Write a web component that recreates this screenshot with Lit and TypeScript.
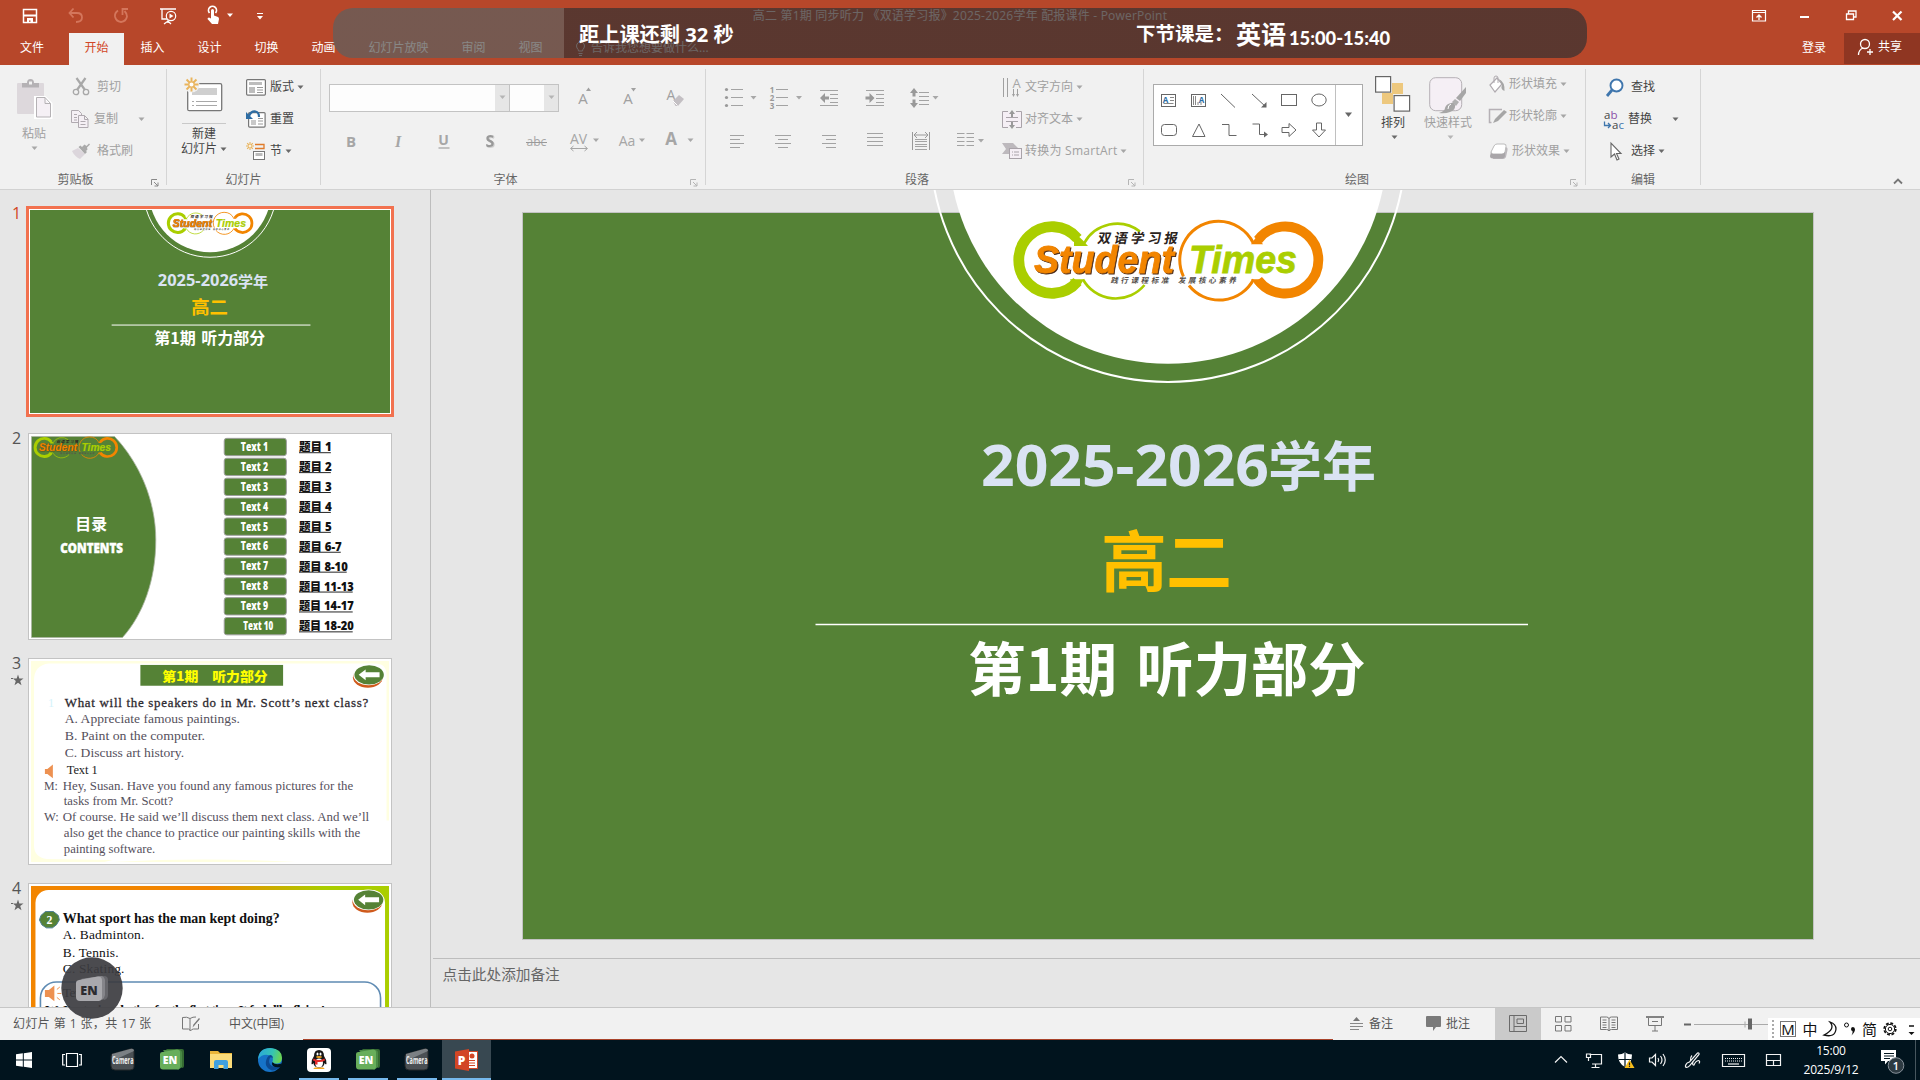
import { LitElement, html, svg, css } from "lit";
import { customElement } from "lit/decorators.js";

const icon = (w: number, h: number, body: unknown, cls = "") =>
  html`<svg class=${cls} width=${w} height=${h} viewBox="0 0 ${w} ${h}">${body}</svg>`;

/* Small drop-down triangle centred on x, y. */
const caret = (x: number, y: number, color = "#a8a8a8") =>
  svg`<path d="M${x - 3} ${y - 1.5}h6l-3 3.5z" fill=${color}></path>`;
const caretIcon = (color = "#a8a8a8") => icon(7, 5, caret(3.5, 2, color));

const lines = (x1: number, x2: number, ys: number[], color = "#a6a6a6") =>
  ys.map((y) => svg`<path d="M${x1} ${y}H${x2}" stroke=${color} fill="none"></path>`);

const G = "#a6a6a6";
const D = "#6a6a6a";

/* ---------- artwork shared by the slide and its thumbnails ---------- */

const logo = () => svg`
  <g fill="none">
    <path d="M1077.500 238.500A33.300 33.300 0 1 0 1077.500 281.500" stroke="#aace00" stroke-width="10.800"></path>
    <path d="M1074 232l9 8.500l5 5.500h-14zM1074 287l5.500-.5L1084 279.200h-14z" fill="#aace00"></path>
    <path d="M1084 243.500A37.500 37.500 0 0 1 1140 231.500" stroke="#aace00" stroke-width="2.600"></path>
    <path d="M1083 279.500A37.500 37.500 0 0 0 1144.500 285" stroke="#aace00" stroke-width="2.600"></path>
    <path d="M1253.300 243A38.700 38.700 0 0 0 1218.500 221.300A38.700 38.700 0 0 0 1183.400 276.400" stroke="#f28500" stroke-width="3"></path>
    <path d="M1189 285.500A38.700 38.700 0 0 0 1253.500 279.500" stroke="#f28500" stroke-width="3"></path>
    <path d="M1258 240A33.500 33.500 0 1 1 1258 280" stroke="#f28500" stroke-width="9.800"></path>
    <path d="M1251 244.200L1257 236l6 8.200zM1251 279.200L1257 286l6-6.800z" fill="#f28500"></path>
  </g>
  <g font-family="Liberation Sans, sans-serif" font-weight="700" font-style="italic" font-size="39">
    <text class="wordmark" x="1034" y="273.200" textLength="140" lengthAdjust="spacingAndGlyphs" fill="#f28500" stroke="#f28500" stroke-width=".8">Student</text>
    <text x="1189" y="273" textLength="108" lengthAdjust="spacingAndGlyphs" fill="#aace00" stroke="#aace00" stroke-width=".8">Times</text>
  </g>
  <g font-family="Noto Sans CJK SC, sans-serif" font-weight="700" fill="#2b2320">
    <text transform="translate(1097 243) skewX(-10)" font-size="13.500" textLength="80">双语学习报</text>
    <text transform="translate(1110.500 283.300) skewX(-12)" font-size="7.500" textLength="58" fill="#55504c">践行课程标准</text>
    <text transform="translate(1178 283.300) skewX(-12)" font-size="7.500" textLength="58" fill="#55504c">发展核心素养</text>
  </g>`;

const coverArt = () => svg`
  <rect x="523" y="213" width="1290" height="726" fill="#558236"></rect>
  <circle cx="1168" cy="144.200" r="219.500" fill="#fff"></circle>
  <circle cx="1168" cy="144.200" r="237.800" fill="none" stroke="#fff" class="ring"></circle>
  ${logo()}
  <g font-weight="700" font-family="Noto Sans CJK SC, sans-serif">
    <text x="981" y="486" font-family="Open Sans, sans-serif" font-size="58" textLength="288" lengthAdjust="spacingAndGlyphs" fill="#dae3f3">2025-2026</text>
    <text x="1268" y="487" font-size="54" textLength="108" fill="#dae3f3">学年</text>
    <text x="1101" y="585.500" font-size="66" textLength="131" fill="#ffc000">高二</text>
    <text x="968" y="691" font-size="58" textLength="149" lengthAdjust="spacingAndGlyphs" fill="#fff">第1期</text>
    <text x="1136.500" y="691" font-size="58" textLength="229" lengthAdjust="spacingAndGlyphs" fill="#fff">听力部分</text>
  </g>
  <path d="M815.500 624.500H1528" stroke="#fff" class="divider"></path>`;

const backBadge = (x: number, y: number) => svg`
  <ellipse cx=${x - 0.8} cy=${y + 2.5} rx="15" ry="10.500" fill="#cf5a1c"></ellipse>
  <ellipse cx=${x} cy=${y} rx="15.500" ry="10.500" fill="#fff"></ellipse>
  <ellipse cx=${x + 0.5} cy=${y} rx="14.800" ry="9.800" fill="#558236"></ellipse>
  <path d="M${x - 10} ${y}l7-5.500v3h14v5h-14v3z" fill="#fff"></path>`;

const tocRows = ["1", "2", "3", "4", "5", "6-7", "8-10", "11-13", "14-17", "18-20"];
const tocWidths = [33, 33, 33, 33, 33, 43, 49, 55, 55, 55];

const contentsArt = () => svg`
  <rect x="28" y="433" width="364" height="207" fill="#fff"></rect>
  <path d="M30.500 435.500H114C139 462 155.500 500 155.500 540C155.500 580 143 615 122 638.500H30.500z" fill="#558236" stroke="#a9b3a0" stroke-width=".8"></path>
  <g transform="translate(-245 375.300) scale(.274)">${logo()}</g>
  <g fill="#fff" font-weight="700" text-anchor="middle">
    <text x="90.500" y="529.500" font-family="Noto Sans CJK SC, sans-serif" font-size="16">目录</text>
    <text x="91" y="553.500" font-family="Open Sans, sans-serif" font-weight="800" font-size="15" stroke="#fff" stroke-width=".5" textLength="63" lengthAdjust="spacingAndGlyphs">CONTENTS</text>
  </g>
  ${tocRows.map((t, i) => {
    const y = 437.4 + i * 20.1;
    return svg`
    <rect x="224.300" y=${y} width="62.500" height="17.500" rx="2.500" fill="#558236" stroke="#9d9d9d"></rect>
    <text x=${i === 9 ? 243.5 : 241} y=${y + 12.7} font-family="Open Sans, sans-serif" font-weight="800" font-size="11.500" fill="#fff" textLength=${i === 9 ? 30 : 27.5} lengthAdjust="spacingAndGlyphs">${"Text " + (i + 1)}</text>
    <text x="299.500" y=${y + 13} font-family="Open Sans, Noto Sans CJK SC, sans-serif" font-weight="800" font-size="12" fill="#111" textLength=${tocWidths[i]} lengthAdjust="spacingAndGlyphs">${"题目 " + t}</text>
    <path d="M299.500 ${y + 14.5}h${tocWidths[i] - 1}" stroke="#222"></path>`;
  })}`;

const q1Lines: [number, number, number, string][] = [
  [64, 723, 176, "A. Appreciate famous paintings."],
  [64, 740, 141, "B. Paint on the computer."],
  [64, 756.5, 120, "C. Discuss art history."],
  [43, 790.5, 14, "M:"],
  [62, 790.5, 292, "Hey, Susan. Have you found any famous pictures for the"],
  [63, 805.5, 110, "tasks from Mr. Scott?"],
  [43, 821.5, 15, "W:"],
  [62, 821.5, 308, "Of course. He said we’ll discuss them next class. And we’ll"],
  [63, 837.5, 298, "also get the chance to practice our painting skills with the"],
  [63, 853.5, 92, "painting software."],
];

const question1Art = () => svg`
  <rect x="28" y="658" width="364" height="207" fill="#fff"></rect>
  <path d="M30 660H390V821H387.500V674Q387.500 662.500 376 662.500H48Q33 664 33 680V846Q33 858 46 860L112 861L104 863H30z" fill="#ffffe1"></path>
  <path d="M112 863q92-5 184 0z" fill="#ffffe1"></path>
  <rect x="140" y="664" width="143.500" height="21" fill="#558236"></rect>
  <text x="162" y="680.500" font-family="Noto Sans CJK SC, sans-serif" font-weight="900" font-size="13" fill="#ffff00" textLength="106" lengthAdjust="spacingAndGlyphs">第1期　听力部分</text>
  ${backBadge(369.5, 674)}
  <g font-family="Liberation Serif, serif" font-size="12.500" fill="#55505c">
    <text x="47" y="706" fill="#d5f3fb">1</text>
    <text x="64" y="706" fill="#2e2a30" font-size="13" stroke="#2e2a30" stroke-width=".3" textLength="305">What will the speakers do in Mr. Scott’s next class?</text>
    <text x="66" y="774" fill="#222" textLength="31">Text 1</text>
    ${q1Lines.map(([x, y, w, t]) => svg`<text x=${x} y=${y} textLength=${w} lengthAdjust="spacingAndGlyphs">${t}</text>`)}
  </g>
  <path d="M44 769h2.500l5.500-4.500v14l-5.500-4.500H44z" fill="#ed9151"></path>`;

const question2Art = () => svg`
  <defs><linearGradient id="edge" x1="0" x2="1"><stop offset=".5" stop-color="#f28500"></stop><stop offset=".82" stop-color="#aace00"></stop></linearGradient></defs>
  <rect x="28" y="883" width="364" height="207" fill="#fff"></rect>
  <rect x="30" y="885" width="360" height="203" fill="url(#edge)"></rect>
  <rect x="34.500" y="889" width="351.500" height="195" rx="13" fill="#fff"></rect>
  ${backBadge(369, 899)}
  <path d="M44.500 910.800h8l5 4 1 4.500-3 5-4 3h-6l-4.500-3-2.500-5 1.500-4.500z" fill="#558236" stroke="#4c7e93"></path>
  <g font-family="Liberation Serif, serif" font-size="13.500" fill="#111">
    <text x="45.500" y="923" fill="#fff" font-size="12" font-weight="700">2</text>
    <text x="62" y="922.500" font-weight="700" font-size="14.500" textLength="218" lengthAdjust="spacingAndGlyphs">What sport has the man kept doing?</text>
    <text x="62" y="938.500" textLength="82">A. Badminton.</text>
    <text x="62" y="956.500" textLength="56">B. Tennis.</text>
    <text x="62" y="972.500" textLength="62">C. Skating.</text>
    <rect x="39.500" y="982" width="342" height="100" rx="16" fill="#fff" stroke="#5f8bb3" stroke-width="1.600"></rect>
    <path d="M44 990h4l5.500-4.500v16l-5.500-4.500h-4z" fill="#ed9151"></path>
    <path d="M56 989.500l3-2.500M56.500 993.500h4M56 997.500l3 2.500" stroke="#ed9151"></path>
    <text x="62" y="997.500" textLength="31">Text 2</text>
    <text x="44" y="1014" font-weight="700" textLength="282">W: I'm trying skating for the first time. It feels like flying!</text>
  </g>`;

/* ---------- ribbon icons ---------- */

const abc = (x: number, y: number, s: number, t: string, extra = "", fill = G, anchor = "middle") =>
  svg`<text x=${x} y=${y} font-size=${s} text-anchor=${anchor} fill=${fill} class=${extra}>${t}</text>`;

const pasteIcon = icon(35, 39, svg`
  <rect x="0" y="4" width="27" height="31" rx="1" fill="#ddd8dc"></rect>
  <path d="M5 8.500V4h5q0-4 3.500-4T17 4h5v4.500z" fill="#b5b2b5"></path><rect x="12" y="2.500" width="3" height="3" fill="#f1f1f1"></rect>
  <path d="M18.500 18.500h9.500l6 6v14H18.500z" fill="#f5f0f5" stroke="#fff" stroke-width="3"></path>
  <path d="M19.500 18.500h8.500l5.500 6v13.500h-14zM28 18.500v6h5.500" fill="#f5f0f5" stroke="#b5b2b5"></path>`);
const cutIcon = icon(18, 18, svg`<g fill="none" stroke="#a8a8a8" stroke-width="1.300"><circle cx="4" cy="14" r="2.700"></circle><circle cx="14" cy="14" r="2.700"></circle><path d="M4.500 0l8.500 12M13.500 0L5 12" stroke-width="2.200"></path></g>`);
const copyIcon = icon(18, 18, svg`<g fill="#f5f0f5" stroke="#b0aab0"><path d="M.5.500h7l3 3v9H.5z"></path><path d="M7.500 5.500h6l3.500 3.500v8.500H7.500zM13.500 5.500v4h3.500"></path><path d="M3 4.500h3M3 7.500h3M3 10h3M9.500 11.500h5M9.500 14.500h5"></path></g>`);
const painterIcon = icon(18, 16, svg`<path d="M0 8l6-3 7 6-5 5q-5-2-8-8z" fill="#dcd6dc"></path><path d="M6.500 4l2-1.500L15 9l-2 2zM10 4l2.500-2.500 2 1.500L17 .500l1 1-3 3 .5 2L14 8z" fill="#a9a9a9"></path>`);
const sun = (x: number, y: number, r: number) => svg`<g transform="translate(${x} ${y})" stroke="#e9b45c" stroke-width=${r / 3.6}>${[0, 45, 90, 135].map((a) => svg`<path d="M${-r} 0H${-r * 0.35}M${r * 0.35} 0H${r}" transform="rotate(${a})"></path>`)}<circle r=${r * 0.38} fill="#fff" stroke-width=${r / 6}></circle></g>`;
const newSlideIcon = icon(40, 36, svg`
  <rect x="3.700" y="6.700" width="34" height="27" rx="1.500" fill="#fff" stroke="#777" stroke-width="1.300"></rect>
  <rect x="8" y="11" width="25" height="7" fill="#cfcfcf"></rect>
  <path d="M8 24.500h2M12 24.500h21M8 28.500h2M12 28.500h21" stroke="#a8a8a8"></path><circle cx="7.500" cy="7.500" r="8" fill="#f1f1f1"></circle>${sun(7.5, 7.5, 7)}`);
const layoutIcon = icon(20, 17, svg`<rect x=".6" y=".6" width="18.800" height="15.500" rx="1" fill="#fff" stroke="#777" stroke-width="1.200"></rect><path d="M3 3h13v3H3zM3 8h6v6H3z" fill="#bdbdbd"></path><path d="M11 8.500h6M11 11h6M11 13.500h6" stroke="#999"></path>`);
const resetIcon = icon(20, 18, svg`<rect x="2.600" y="2.600" width="16.500" height="14.500" rx="1" fill="#fff" stroke="#777" stroke-width="1.200"></rect><path d="M5 10h5v5H5z" fill="#c9c9c9"></path><path d="M12 8.500h5M12 11h5M12 14h5" stroke="#999"></path><path d="M0 2v7h7z" fill="#2e6da4"></path><path d="M3 6q2-5 6.500-4.500Q13 2 13 7" fill="none" stroke="#2e6da4" stroke-width="2.200"></path>`);
const sectionIcon = icon(20, 18, svg`${sun(4, 4, 4)}<path d="M9 2.500h9v4H9" fill="none" stroke="#e07b2a" stroke-width="1.300"></path><rect x="7.500" y="9.500" width="11" height="8" fill="#fff" stroke="#777"></rect><path d="M9.500 12.500h7" stroke="#bbb" stroke-width="3"></path>`);

const cell = (body: unknown) => icon(46, 30, body, "cell");
const bar = (y: number[], x1: number, x2: number) => lines(x1, x2, y, "#a3a3a3");

const fontSizeCells = [
  cell(svg`${abc(22, 20.5, 15, "A", "", "#a0a0a0")}<path d="M25 8l2.500-3.500L30 8z" fill="#a0a0a0"></path>`),
  cell(svg`${abc(21, 20.5, 15, "A", "", "#a0a0a0")}<path d="M24 5h5l-2.500 3.500z" fill="#a0a0a0"></path>`),
  cell(svg`${abc(17, 17, 14, "A", "", "#a0a0a0")}<path d="M19 18l6-6 5 4-6 7h-2.500z" fill="#c3bfc3"></path><path d="M19 18l4.500 4.500" stroke="#fff"></path>`),
];
const styleCells = [
  cell(abc(23, 20.5, 15, "B", "b")),
  cell(abc(24, 20.5, 16, "I", "b it")),
  cell(svg`${abc(22.5, 19, 14, "U", "b")}<path d="M17.500 22h11" stroke="#a6a6a6" stroke-width="1.300"></path>`),
  cell(abc(23, 20.5, 16, "S", "b glow", "#999")),
  cell(svg`${abc(22.5, 20, 12, "abc")}<path d="M12 16.500h21" stroke="#999"></path>`),
  cell(svg`${abc(18.5, 18, 14, "AV")}<path d="M11 22.500h16M13.500 20l-3 2.500 3 2.500M24.500 20l3 2.500-3 2.500" fill="none" stroke="#a6a6a6"></path>${caret(36, 14)}`),
  cell(svg`${abc(21, 20, 14, "Aa")}${caret(36, 14)}`),
  cell(svg`${abc(18, 19, 17, "A", "b")}${caret(37.5, 14)}`),
];
const paraCells1 = [
  cell(svg`<g fill="#999"><circle cx="13.500" cy="6.500" r="1.600"></circle><circle cx="13.500" cy="14.500" r="1.600"></circle><circle cx="13.500" cy="22.500" r="1.600"></circle></g>${bar([6.5, 14.5, 22.5], 18, 30)}${caret(40.5, 14.5)}`),
  cell(svg`${["1", "2", "3"].map((n, i) => abc(13, 9.5 + i * 8, 8, n, "b", "#999"))}${bar([6.5, 14.5, 22.5], 17, 29)}${caret(40, 14.5)}`),
  cell(svg`${bar([7.5, 22.5], 15, 33)}${bar([11.5, 15.5, 19.5], 25, 33)}<path d="M15 15l5-5v3.500h4v3h-4V20z" fill="#999"></path>`),
  cell(svg`${bar([7.5, 22.5], 14, 32)}${bar([11.5, 15.5, 19.5], 24, 32)}<path d="M22.500 15l-5-5v3.500h-4v3h4V20z" fill="#999"></path>`),
  cell(svg`${bar([9.5, 13.5, 17.5, 21.5], 21, 31)}<path d="M16 5l-4 5h2.500v3.500h3V10H20zM16 25l-4-5h2.500v-3.500h3V20H20z" fill="#999"></path>${caret(37.5, 14.5)}`),
];
const paraCells2 = [
  cell(svg`${bar([9.5, 17.5], 17, 31)}${bar([13.5, 21.5], 17, 27)}`),
  cell(svg`${bar([9.5, 17.5], 16, 32)}${bar([13.5, 21.5], 19, 29)}`),
  cell(svg`${bar([9.5, 17.5], 17, 31)}${bar([13.5, 21.5], 21, 31)}`),
  cell(bar([7.5, 11.5, 15.5, 19.5], 15, 31)),
  cell(svg`<path d="M14.500 6v18M31.500 6v18M16 9h14M19 6l-3 3 3 3M27 6l3 3-3 3" stroke="#999" fill="none"></path>${bar([13.5, 15.5, 18.5, 20.5, 23.5], 17, 29)}`),
  cell(svg`${bar([7.5, 11.5, 15.5, 19.5], 13, 20.5)}${bar([7.5, 11.5, 15.5, 19.5], 22.5, 30)}${caret(37, 14.5)}`),
];

const dirIcon = icon(20, 21, svg`<path d="M1.500 1v19M5.500 1v19M11.500 12v7M15.500 12v7" stroke="#a0a0a0"></path>${abc(14.5, 11, 13, "A")}<path d="M10 17l1.500 3 1.500-3zM14 17l1.500 3 1.500-3z" fill="#a0a0a0"></path>`);
const alignTextIcon = icon(20, 19, svg`<rect x="1" y="2" width="18" height="15" fill="#f5eff5"></rect><path d="M6 1.500H.500v16H6M14 1.500h5.500v16H14M4 7.500h12M4 11.500h12" stroke="#a9a3a9" fill="none"></path><path d="M10 0l-3 4h2v3h2V4h2zM10 19l-3-4h2v-3h2v3h2z" fill="#999"></path>`);
const smartIcon = icon(20, 17, svg`<path d="M0 0h11l5 5-2 2H7v4H0l4-5z" fill="#bdb9bd"></path><rect x="7.500" y="5.500" width="12" height="10" fill="#f5eff5" stroke="#a9a3a9"></rect><path d="M10 9h1M12 9h5M10 12h1M12 12h5" stroke="#a9a3a9"></path>`);

const shape = (body: unknown) => icon(30, 30, svg`<g fill="none" stroke="#666">${body}</g>`, "shape");
const galleryShapes = [
  shape(svg`<rect x="7.500" y="9.500" width="14" height="12"></rect><text x="11.500" y="17.500" font-size="8" font-weight="700" text-anchor="middle" fill="#2e6da4" stroke="none">A</text><path d="M16 12.500h4M16 15.500h4M9.500 18.500h10" stroke="#888"></path>`),
  shape(svg`<rect x="7.500" y="9.500" width="14" height="12"></rect><text x="17.500" y="17.500" font-size="8" font-weight="700" text-anchor="middle" fill="#2e6da4" stroke="none">A</text><path d="M9.500 11v9M11.500 11v9M14 17v3M17 17v3" stroke="#888"></path>`),
  shape(svg`<path d="M7 9l14 13.500"></path>`),
  shape(svg`<path d="M7 9l14 13"></path><path d="M21.500 17v5.500H16z" fill="#666" stroke="none"></path>`),
  shape(svg`<rect x="6.500" y="9.500" width="15" height="11"></rect>`),
  shape(svg`<ellipse cx="14" cy="15" rx="7.200" ry="6"></ellipse>`),
  shape(svg`<rect x="7.500" y="9.500" width="15" height="11" rx="3"></rect>`),
  shape(svg`<path d="M15 9l6 12.500H8.500z"></path>`),
  shape(svg`<path d="M8 9.500h7v11h7.500"></path>`),
  shape(svg`<path d="M7.500 9h7v10.500h6"></path><path d="M19 16.500l4 3-4 3z" fill="#666" stroke="none"></path>`),
  shape(svg`<path d="M7 12.500h7v-4l7 6.500-7 6.500v-4H7z"></path>`),
  shape(svg`<path d="M11.500 8v7h-4l6.500 7 6.500-7h-4V8z"></path>`),
];
const arrangeIcon = icon(36, 36, svg`<path d="M17 7h11v11H17zM7 17h11v11H7z" fill="#edc87e"></path><rect x=".6" y=".6" width="15" height="15.500" fill="#fff" stroke="#666" stroke-width="1.200"></rect><rect x="19.100" y="19.600" width="15.500" height="15.500" fill="#fff" stroke="#666" stroke-width="1.200"></rect>`);
const quickIcon = icon(38, 38, svg`<rect x=".7" y=".7" width="32" height="33" rx="6" fill="#f5eff5" stroke="#b5b0b5"></rect><path d="M37 10v6l-6 8-4-3z" fill="#a6a6a6"></path><path d="M26 22l4 3-3 4-4-4z" fill="#b0b0b0"></path><path d="M22 26q3-1 4 2 1 5-5 7-5 2-11 1 6-2 6-5 1-4 6-5z" fill="#a6a6a6"></path><path d="M22 27q-3 1-3 5" stroke="#fff" fill="none"></path>`);
const fillIcon = icon(18, 17, svg`<path d="M1 9l7-7 5 6-7 8z" fill="#fff" stroke="#b0abb0" stroke-width="1.200"></path><path d="M5 7V2q0-2 2-2t2 2v5" fill="none" stroke="#b0abb0"></path><path d="M10 3q6 3 5.500 12Q11 13 13 9z" fill="#a6a6a6"></path>`);
const outlineIcon = icon(20, 16, svg`<path d="M14 1.500H1.500v13h2" fill="none" stroke="#b5b0b5" stroke-width="1.500"></path><path d="M5 15l2-4L16 2l3 2-9 9z" fill="#a6a6a6"></path>`);
const effectIcon = icon(19, 17, svg`<path d="M6 4h10q3 0 2.500 3L17 14q-1 2-3 2H4z" fill="#bcb8bc"></path><path d="M5 3q1-2 3-2h7q2.500 0 2 2.500L16 9q-.5 2-3 2H4q-2 0-2-2z" fill="#fff" stroke="#bbb"></path><path d="M2 9q0 2 2 2h9q2 0 3-2v4q-1 2.500-3 2.500H4q-3 0-3-2.500z" fill="#a9a6a9"></path>`);
const findIcon = icon(20, 19, svg`<circle cx="11.500" cy="7.500" r="6" fill="#fff" stroke="#3f76ad" stroke-width="1.900"></circle><path d="M7 12L2 18" stroke="#3f76ad" stroke-width="2.800"></path>`);
const replaceIcon = icon(22, 21, svg`<text x="0" y="10" font-size="11.500" fill="#444">a<tspan fill="#8a4fa8">b</tspan></text><text x="8" y="20" font-size="11.500" fill="#444">a<tspan fill="#3f76ad">c</tspan></text><path d="M.5 12.500v4H6M4 14l2.500 2.500L4 19" fill="none" stroke="#3f76ad" stroke-width="1.300"></path>`);
const selectIcon = icon(16, 19, svg`<path d="M4 1v14l3.500-3 2.500 6 2-1-2.500-5.500H14z" fill="#fff" stroke="#666" stroke-width="1.100"></path>`);
const launcher = (c: string) => icon(8, 8, svg`<path d="M.5 6V.500H6M3 3l4 4M7 3.500V7H3.500" fill="none" stroke=${c}></path>`);

/* ---------- taskbar icons ---------- */

const cameraIcon = icon(26, 26, svg`<path d="M2 7L20 2q4-1 4 3v15q0 3-4 3H5q-4 0-4-4V9z" fill="#4b5054" stroke="#24282b"></path><path d="M2 7L20 2q4-1 4 2l-22 10z" fill="#7b8084"></path><text x="2" y="16.500" font-size="10" font-weight="700" fill="#f0f0f0" textLength="21.500" lengthAdjust="spacingAndGlyphs">Camera</text>`);
const enIcon = icon(26, 24, svg`<path d="M7 1h16q2 0 2 2v15q0 2-2 2z" fill="#356b32"></path><path d="M4 2h16q3 0 3 3v14l-4 3z" fill="#4a8a45"></path><path d="M3.500 4L18 1.500q3 0 3 3v14q0 3-3 3H4q-3 0-3-3V6q0-2 2.500-2z" fill="#68ae5b"></path><text x="11" y="16" font-size="10.500" font-weight="800" text-anchor="middle" fill="#fff">EN</text>`);
const tray = (w: number, body: unknown) => icon(w, 20, svg`<g fill="none" stroke="#f2f2f2" stroke-width="1.200">${body}</g>`);

@customElement("app-root")
export class AppRoot extends LitElement {
  static styles = css`
    :host { display: block; width: 1920px; height: 1080px; position: relative; overflow: hidden; background: #e6e6e6;
      font: 12px/16px "Open Sans", "Noto Sans CJK SC", sans-serif; color: #444; }
    * { box-sizing: border-box; }
    svg { display: block; flex: none; overflow: visible; }
    .app { display: flex; flex-direction: column; height: 1080px; }
    .b { font-weight: 700; }
    .it { font-style: italic; font-family: "Liberation Serif", serif; }
    .glow { filter: drop-shadow(1.500px 1.500px .5px #cfcfcf); }
    .wordmark { filter: drop-shadow(1.500px 1.300px 0 #4a2a18); }
    .ring { stroke-width: 2; }
    .divider { stroke-width: 1.300; }

    .head { height: 65px; background: #b7472a; color: #fff; flex: none; }
    .title { display: grid; grid-template-columns: 1fr auto 1fr; height: 31px; align-items: center; }
    .name { letter-spacing: .2px; }
    .quick { display: flex; align-items: center; padding-left: 7px; }
    .controls { display: flex; justify-content: flex-end; }
    .tabs { display: flex; height: 34px; padding-top: 2px; }
    .tab { display: flex; align-items: center; padding: 0 16.500px 2px; white-space: nowrap; }
    .tab.file { width: 69px; padding-left: 20px; }
    .tab.on { width: 55px; padding: 0 0 2px; justify-content: center; background: #f1f1f1; color: #d24726; }
    .tab.tell { padding-left: 16px; gap: 5px; }
    .sign { margin-left: auto; display: flex; }
    .share { width: 76px; height: 31px; background: #8f3622; display: flex; align-items: center; padding-left: 13px; gap: 4px; padding-bottom: 3px; }
    .login { width: 42px; line-height: 30px; }

    .ribbon { height: 125px; flex: none; background: #f1f1f1; border-bottom: 1px solid #d2d2d2; display: flex; padding-top: 4px; }
    .group { height: 116px; border-right: 1px solid #d5d5d5; display: flex; flex-direction: column; flex: none; }
    .g1 { width: 167px; } .g2 { width: 154px; } .g3 { width: 385px; } .g4 { width: 438px; } .g5 { width: 442px; } .g6 { width: 115px; }
    .body { display: flex; height: 103px; flex: none; }
    .foot { display: flex; height: 13px; color: #666; }
    .foot span { flex: 1; text-align: center; }
    .foot svg { margin: 7px 7px 0 0; }
    .muted { color: #a0a0a0; }
    .rows { display: flex; flex-direction: column; padding-top: 2px; }
    .cmd { display: flex; height: 32px; align-items: center; white-space: nowrap; }
    .slot { display: flex; flex: none; justify-content: center; }
    .big { display: flex; flex-direction: column; align-items: center; white-space: nowrap; }
    .paste { width: 68px; padding: 10px 0 0; } .paste span { margin: 8px 0 0; }
    .down { margin-top: 4px; }
    .clip .slot { width: 20px; margin: 0 6px 0 3px; }
    .clip .near .slot { margin: 0 4px 0 2px; }
    .new { width: 74px; padding-top: 8px; }
    .new .rule { width: 44px; height: 1px; background: #c9c9c9; margin: 10px 0 2px; }
    .new .split { display: flex; align-items: center; gap: 3px; margin-top: -1px; }
    .slides { margin-left: 5px; } .slides .slot { width: 20px; margin-right: 4px; }
    .strips { padding: 7px 0 0 6.500px; }
    .g3 .strips { padding-left: 7px; }
    .strip { display: flex; height: 43px; align-items: center; }
    .cell { width: 46px; margin-right: .4px; }
    .combo { height: 28px; border: 1px solid #c3c3c3; background: #fdfdfd; display: flex; justify-content: flex-end; }
    .combo i { width: 14px; background: #e6e6e6; display: grid; place-items: center; }
    .c1 { width: 181px; margin-left: 1px; } .c2 { width: 50px; margin: 0 2px 0 -1px; }
    .dirs { margin-left: auto; width: 141px; } .dirs .slot { width: 20px; margin-right: 3px; }
    .dirs .wide { letter-spacing: .25px; }
    .gallery { display: flex; width: 210px; height: 62px; margin: 15px 0 0 9px; border: 1px solid #ababab; background: #fff; flex: none; }
    .shapes { display: grid; grid-template-columns: repeat(6, 30.200px); grid-auto-rows: 30px; flex: 1; }
    .more { width: 27px; border-left: 1px solid #c0c0c0; display: grid; place-items: center; }
    .arrange { width: 60px; padding-top: 7px; } .arrange span { margin-top: 3px; }
    .styles { width: 50px; padding-top: 8px; } .styles span { margin-top: 0; }
    .fx { margin-left: 15px; } .fx .slot { width: 20px; margin-right: 1px; } .fx .cmd:first-child { height: 26px; } .fx .cmd:nth-child(2) { height: 38px; } .fx .cmd:nth-child(3) .slot { margin-right: 4px; }
    .edit { margin-left: 18px; } .edit .slot { width: 22px; margin-right: 5px; } .edit .tight .slot { margin-right: 2px; }
    .fold { margin: 108px 17px 0 auto; }

    .main { height: 817px; display: flex; flex: none; }
    .panel { width: 431px; padding-top: 16px; overflow: hidden; border-right: 1px solid #bdbdbd; flex: none; }
    .item { display: flex; height: 225px; padding-left: 12px; }
    .no { width: 14px; font-size: 16px; line-height: 18px; margin-top: -2px; color: #555; }
    .no svg { margin-top: 2px; }
    .item.on .no { color: #d24726; }
    .thumb { width: 368px; height: 211px; border: 2px solid transparent; }
    .thumb .ring, .thumb .divider { vector-effect: non-scaling-stroke; stroke-width: 1; }
    .item.on .thumb { border: 3px solid #f2714f; padding: 1px; background: #fff; }
    .thumb svg { width: 364px; height: 207px; border: 1px solid #c3c3c3; overflow: hidden; }
    .item.on .thumb svg { width: 360px; height: 203px; border: 0; }
    .right { flex: 1; display: flex; flex-direction: column; }
    .stage { height: 768px; overflow: hidden; }
    .notes { margin-left: 2px; border-top: 1px solid #bdbdbd; height: 49px; padding: 5px 9.500px; font-size: 14.670px; line-height: 20px; color: #666; }

    .status { height: 33px; flex: none; background: #f1f1f1; border-top: 1px solid #c6c6c6; display: flex; align-items: center; padding: 0 0 1px 13px; color: #555; white-space: nowrap; }
    .count { width: 169px; letter-spacing: .4px; } .lang { margin-left: 29px; }
    .push { margin-left: auto; width: 570px; display: flex; align-items: center; height: 32px; }
    .push .n1 { width: 76px; display: flex; align-items: center; gap: 6px; } .push .n2 { width: 69px; display: flex; align-items: center; gap: 5px; }
    .view { width: 46px; height: 32px; display: grid; place-items: center; } .view.on { background: #cacaca; }
    .view + .view { position: relative; left: -1px; }

    .taskbar { height: 40px; flex: none; background: #01141e; display: flex; color: #fff; }
    .task { width: 49px; height: 40px; display: grid; place-items: center; }
    .task.s { width: 48px; } .task.first { margin-left: 2.500px; }
    .task.run { border-bottom: 2px solid transparent; background: linear-gradient(#76b9ed, #76b9ed) 50% 100% / 40px 2px no-repeat border-box; padding-top: 2px; }
    .task.active { background: linear-gradient(#76b9ed, #76b9ed) 50% 100% / 49px 2px no-repeat border-box, #384851; }
    .tray { margin-left: auto; display: flex; align-items: center; }
    .clock { width: 64px; text-align: center; line-height: 19px; font-size: 12px; letter-spacing: -.2px; margin: 0 18px 0 6px; }
    .peek { width: 5px; height: 40px; border-left: 1px solid #47565e; }

    .banner { position: absolute; left: 333px; top: 8px; width: 1254px; height: 50px; border-radius: 20px; overflow: hidden; display: flex; align-items: center; background: linear-gradient(90deg, rgba(96,95,93,.75) 231.500px, rgba(59,50,49,.75) 231.500px); color: #fff; font-weight: 700; font-size: 19.500px; line-height: 30px; padding: 1px 0 0 246px; white-space: nowrap; }
    .banner .left { font-size: 20.200px; }
    .banner .next { margin-left: auto; width: 100px; }
    .banner .subject { font-size: 25px; width: 53px; }
    .banner .time { font: 900 18.300px/30px "Lato", sans-serif; width: 298px; padding-top: 8px; }
    .redline { position: absolute; left: 303px; top: 1038.500px; width: 1030px; height: 1.500px; background: #a8432b; }
    .float { position: absolute; left: 61px; top: 957px; }
    .ime { position: absolute; left: 1768px; top: 1018px; width: 152px; height: 22px; background: #fff; }
  `;

  private head() {
    return html`<header class="head">
      <div class="title">
        <div class="quick">
          ${icon(46, 24, svg`<path d="M16.500 5.500h13v13h-13z" fill="none" stroke="#fff" stroke-width="1.500"></path><path d="M17 11.500h12" stroke="#fff" stroke-width="2"></path><path d="M20 14h6v5h-2.500v-2.500H22V19h-2z" fill="#fff"></path>`)}
          ${icon(46, 24, svg`<path d="M20.500 4.500L16.500 9l4 4.500M17 9h7q5 0 5 4.500T23 18" fill="none" stroke="#d4765c" stroke-width="1.800"></path>`)}
          ${icon(46, 24, svg`<path d="M19 6.500q-3.500 2.500-3 6 1 5 6 5.500 5-.5 6-5.500 0-3-2.500-5.500M23.500 11V5H29" fill="none" stroke="#d4765c" stroke-width="1.800"></path>`)}
          ${icon(46, 24, svg`<path d="M15 5h16M17 5v10h6M23 16v3M19 20l4-3 3 3" fill="none" stroke="#fff" stroke-width="1.300"></path><circle cx="26" cy="12" r="4.700" fill="#b7472a" stroke="#fff" stroke-width="1.200"></circle><path d="M24.500 9.500l4 2.500-4 2.500z" fill="#fff"></path>`)}
          ${icon(46, 24, svg`<path d="M18.500 9a4 4 0 1 1 6 0" fill="none" stroke="#fff" stroke-width="1.700"></path><path d="M20 6.500q0-1.500 1.500-1.500t1.500 1.500v5l4 1.500q1 .5 1 2l-1 5h-6l-4.500-5q0-1.500 1.500-1.500l2 1z" fill="#fff"></path>${caret(39, 11, "#fff")}`)}
          ${icon(46, 24, svg`<path d="M20 9.500h6" stroke="#fff"></path>${caret(23, 13.5, "#fff")}`)}
        </div>
        <div class="name">高二 第1期 同步听力 《双语学习报》2025-2026学年 配报课件 - PowerPoint</div>
        <div class="controls">
          ${icon(46, 24, svg`<path d="M16.500 6.500h13v10.500h-13zM16.500 8.500h13" fill="none" stroke="#fff" stroke-width="1.200"></path><path d="M23 16v-4.500M20.500 13.500l2.500-2.500 2.500 2.500" fill="none" stroke="#fff" stroke-width="1.300"></path>`)}
          ${icon(46, 24, svg`<path d="M18 13h9" stroke="#fff" stroke-width="2"></path>`)}
          ${icon(46, 24, svg`<path d="M18.500 10h7v5.500h-7zM20.500 10V7h7.500v6h-2" fill="none" stroke="#fff" stroke-width="1.300"></path>`)}
          ${icon(46, 24, svg`<path d="M19 7.500l8.500 8.500M27.500 7.500L19 16" stroke="#fff" stroke-width="2.200"></path>`)}
        </div>
      </div>
      <nav class="tabs">
        <div class="tab file">文件</div><div class="tab on">开始</div>
        ${["插入", "设计", "切换", "动画", "幻灯片放映", "审阅", "视图"].map((t) => html`<div class="tab">${t}</div>`)}
        <div class="tab tell">${icon(11, 15, svg`<path d="M3.500 10q0-1.500-1.500-3-1-2 0-4Q3.500.700 5.500.700T9 3q1 2 0 4-1.500 1.500-1.500 3zM3.500 12.500h4M4 14.500h3" fill="none" stroke="#fff"></path>`)}<span>告诉我您想要做什么...</span></div>
        <div class="sign"><div class="login">登录</div>
          <div class="share">${icon(17, 18, svg`<circle cx="8" cy="6" r="4.500" fill="none" stroke="#fff" stroke-width="1.300"></circle><path d="M1.500 17q0-5 4.500-7M13 11v6M10 14h6" fill="none" stroke="#fff" stroke-width="1.300"></path>`)}<span>共享</span></div></div>
      </nav>
    </header>`;
  }

  private cmd(ic: unknown, text: string, opts: { caret?: string; cls?: string; far?: number } = {}) {
    return html`<div class="cmd ${opts.cls ?? ""}"><span class="slot">${ic}</span><span>${text}</span>${
      opts.caret ? html`<svg width=${(opts.far ?? 3) + 8} height="5">${caret((opts.far ?? 3) + 3.5, 2, opts.caret)}</svg>` : ""}</div>`;
  }

  private foot(label: string, color = "") {
    return html`<div class="foot"><span>${label}</span>${color ? launcher(color) : ""}</div>`;
  }

  private ribbon() {
    return html`<section class="ribbon">
      <div class="group g1"><div class="body muted">
        <div class="big paste">${pasteIcon}<span>粘贴</span><svg class="down" width="7" height="5">${caret(3.5, 2)}</svg></div>
        <div class="rows clip">${this.cmd(cutIcon, "剪切")}${this.cmd(copyIcon, "复制", { caret: G, far: 20, cls: "near" })}${this.cmd(painterIcon, "格式刷")}</div>
      </div>${this.foot("剪贴板", "#888")}</div>

      <div class="group g2"><div class="body">
        <div class="big new">${newSlideIcon}<div class="rule"></div><span>新建</span><div class="split"><span>幻灯片</span>${caretIcon("#666")}</div></div>
        <div class="rows slides">${this.cmd(layoutIcon, "版式", { caret: D })}${this.cmd(resetIcon, "重置")}${this.cmd(sectionIcon, "节", { caret: D })}</div>
      </div>${this.foot("幻灯片")}</div>

      <div class="group g3"><div class="body"><div class="strips">
        <div class="strip"><div class="combo c1"><i>${caretIcon("#b5b5b5")}</i></div><div class="combo c2"><i>${caretIcon("#b5b5b5")}</i></div>${fontSizeCells}</div>
        <div class="strip">${styleCells}</div>
      </div></div>${this.foot("字体", "#b5b5b5")}</div>

      <div class="group g4"><div class="body muted"><div class="strips">
        <div class="strip">${paraCells1}</div><div class="strip">${paraCells2}</div></div>
        <div class="rows dirs">${this.cmd(dirIcon, "文字方向", { caret: G })}${this.cmd(alignTextIcon, "对齐文本", { caret: G })}${this.cmd(smartIcon, "转换为 SmartArt", { caret: G, cls: "wide" })}</div>
      </div>${this.foot("段落", "#b5b5b5")}</div>

      <div class="group g5"><div class="body">
        <div class="gallery"><div class="shapes">${galleryShapes}</div><div class="more">${icon(9, 6, svg`<path d="M0 .500h7L3.500 5z" fill="#666"></path>`)}</div></div>
        <div class="big arrange">${arrangeIcon}<span>排列</span><svg class="down" width="7" height="5">${caret(4.5, 2, D)}</svg></div>
        <div class="big styles muted">${quickIcon}<span>快速样式</span><svg class="down" width="7" height="5">${caret(5.5, 2, "#b5b5b5")}</svg></div>
        <div class="rows fx muted">${this.cmd(fillIcon, "形状填充", { caret: G })}${this.cmd(outlineIcon, "形状轮廓", { caret: G })}${this.cmd(effectIcon, "形状效果", { caret: G })}</div>
      </div>${this.foot("绘图", "#b5b5b5")}</div>

      <div class="group g6"><div class="body"><div class="rows edit">
        ${this.cmd(findIcon, "查找")}${this.cmd(replaceIcon, "替换", { caret: D, far: 20, cls: "tight" })}${this.cmd(selectIcon, "选择", { caret: D })}
      </div></div>${this.foot("编辑")}</div>
      <div class="fold">${icon(10, 8, svg`<path d="M1 6.500L5 2.500l4 4" fill="none" stroke="#777" stroke-width="1.800"></path>`)}</div>
    </section>`;
  }

  private main() {
    const star = icon(12, 12, svg`<path d="M6 .500l1.300 4h4.200L8.200 7l1.300 4.300-3.500-2.600L2.500 11.300 3.800 7 1 4.500h3.700z" fill="#666"></path><path d="M-1 4.500h2" stroke="#666"></path>`);
    const thumbs = [
      { vb: "523 213 1290 726", art: coverArt(), star: false },
      { vb: "28 433 364 207", art: contentsArt(), star: false },
      { vb: "28 658 364 207", art: question1Art(), star: true },
      { vb: "28 883 364 207", art: question2Art(), star: true },
    ];
    return html`<main class="main">
      <aside class="panel">${thumbs.map((t, i) => html`<div class="item ${i === 0 ? "on" : ""}">
        <div class="no">${i + 1}${t.star ? star : ""}</div>
        <div class="thumb"><svg viewBox=${t.vb} preserveAspectRatio="none">${t.art}</svg></div></div>`)}</aside>
      <div class="right">
        <svg class="stage" width="1489" height="768" viewBox="431 190 1489 768"><rect x="522.500" y="212.500" width="1291" height="727" fill="none" stroke="#c3c3c3"></rect>${coverArt()}</svg>
        <div class="notes">点击此处添加备注</div>
      </div>
    </main>`;
  }

  private status() {
    return html`<footer class="status">
      <div class="count">幻灯片 第 1 张，共 17 张</div>
      ${icon(18, 16, svg`<path d="M8 14.500V2.500Q5 .500.500 1.500v11.500h6q1 0 2 2 1-2 3-2h5V8M8 2.500Q11 .700 14 1" fill="none" stroke="#777"></path><path d="M10.500 11.500l1-3L17 2l1 1-6 7z" fill="#777"></path>`)}
      <div class="lang">中文(中国)</div>
      <div class="push">
        <div class="n1">${icon(13, 14, svg`<path d="M6.500 0l3.500 4H3z" fill="#777"></path><path d="M0 6.500h13M0 9.500h13M0 12.500h9" stroke="#888"></path>`)}<span>备注</span></div>
        <div class="n2">${icon(15, 15, svg`<path d="M1 0h13q1 0 1 1v9q0 1-1 1H10l-3 4v-4H1q-1 0-1-1V1q0-1 1-1z" fill="#7a7a7a"></path>`)}<span>批注</span></div>
        <div class="view on">${icon(18, 17, svg`<path d="M.500.500h17v16H.500zM5 .500v16M5 11.500h12.500M8 4h6.500v4.500H8z" fill="none" stroke="#6a6a6a"></path>`)}</div>
        <div class="view">${icon(17, 16, svg`<path d="M.500.500h6v5.500h-6zM10 .500h6v5.500h-6zM.500 9.500h6V15h-6zM10 9.500h6V15h-6z" fill="none" stroke="#777"></path>`)}</div>
        <div class="view">${icon(18, 16, svg`<path d="M9 2v13M.500 1h6q2 0 2.500 1.500Q9.500 1 11.500 1h6v12.500h-6q-2 0-2.500 1.500-.5-1.500-2.500-1.500h-6zM2.500 4h4M2.500 6.500h4M2.500 9h4M2.500 11.500h4M11.500 4h4M11.500 6.500h4M11.500 9h4M11.500 11.500h4" fill="none" stroke="#777"></path>`)}</div>
        <div class="view">${icon(18, 16, svg`<path d="M0 1h18" stroke="#777" stroke-width="1.800"></path><path d="M2.500 2v7.500h13V2M6 5.500h6M9 9.500V15M6 15h6" fill="none" stroke="#777"></path>`)}</div>
        ${icon(230, 24, svg`<path d="M5 12.500h7" stroke="#666" stroke-width="2"></path><path d="M15 12.500h180" stroke="#aaa"></path><path d="M66 9.500v6" stroke="#aaa"></path><path d="M69 6.500h4v11h-4z" fill="#666"></path><path d="M210 7h13" stroke="#888" stroke-width="1.500"></path>`)}
      </div>
    </footer>`;
  }

  private taskbar() {
    return html`<footer class="taskbar">
      <div class="task s">${icon(16, 16, svg`<path d="M0 2.300L6.800 1.300v6.300H0zM7.800 1.200L16 0v7.600H7.800zM0 8.500h6.800v6.300L0 13.800zM7.800 8.500H16V16l-8.200-1.200z" fill="#fff"></path>`)}</div>
      <div class="task s">${icon(20, 16, svg`<path d="M4.500 1.500h11v13h-11zM3 2.500H.700v10.500H3M17 2.500h2.300v10.500H17" fill="none" stroke="#fff" stroke-width="1.200"></path>`)}</div>
      <div class="task first">${cameraIcon}</div>
      <div class="task">${enIcon}</div>
      <div class="task">${icon(22, 20, svg`<path d="M0 1h8l2 2h12v5H0z" fill="#e9b53a"></path><path d="M0 4h22v14H0z" fill="#fbdc7a"></path><path d="M4 19v-7q0-2 2-2h10q2 0 2 2v7h-4.500v-4h-5v4z" fill="#3fa0e0"></path>`)}</div>
      <div class="task">${icon(24, 24, svg`<defs><linearGradient id="e1" x1="0" x2="1" y1=".2" y2=".4"><stop offset="0" stop-color="#2aa6dc"></stop><stop offset=".6" stop-color="#35c4b4"></stop><stop offset="1" stop-color="#6bd552"></stop></linearGradient></defs><circle cx="12" cy="12" r="12" fill="#1673c8"></circle><path d="M0 11Q1 0 12.500 0 24 1 24 10q0 5-5 5.500-5 0-4.500-2Q16 10 12 7.500 5 5 0 11z" fill="url(#e1)"></path><path d="M9 10q-4 9 5 12.500 5 0 8-4-5 1.500-8-.500-4-2.500-2.500-7 1-3 3-.5 1-3-2-3.500-2 0-3.500 3z" fill="#0c4a92"></path><path d="M14.500 14q2.500 3.500 9.500 1.500l-1.500 3.200q-4.500 1.300-7.500-.7-2-2-.5-4z" fill="#01141e"></path>`)}</div>
      <div class="task run">${icon(24, 24, svg`<rect width="24" height="24" rx="4" fill="#fff"></rect><path d="M12 2q5 0 5 6 3 4 2.500 8-1 1-2-1 0 4-5.500 5-5.500-1-5.500-5-1 2-2 1Q4 12 7 8q0-6 5-6z" fill="#161616"></path><ellipse cx="12" cy="15" rx="4" ry="4.500" fill="#fff"></ellipse><path d="M6.500 10.500q5.500 3 11 0l.5 2q-6 3-12 0zM8 12.500h2.500v4H8z" fill="#e22b2b"></path><ellipse cx="10.500" cy="6" rx="1" ry="1.500" fill="#fff"></ellipse><ellipse cx="13.500" cy="6" rx="1" ry="1.500" fill="#fff"></ellipse><ellipse cx="12" cy="9" rx="3" ry="1" fill="#f5a81c"></ellipse><path d="M6.500 21q0-2 2.500-1.500h6q2.500-.500 2.500 1.500z" fill="#f5a81c"></path>`)}</div>
      <div class="task run">${enIcon}</div>
      <div class="task run">${cameraIcon}</div>
      <div class="task run active">${icon(23, 22, svg`<rect x="11" y="2.500" width="11.500" height="17" fill="#fff" stroke="#d24625"></rect><path d="M14 14h6M14 16.500h6M14 11.500h6" stroke="#d24625"></path><circle cx="17" cy="7" r="2.500" fill="#d24625"></circle><path d="M0 2.500L14 0v22L0 19.500z" fill="#d24625"></path><text x="6.500" y="15.500" font-size="12" font-weight="800" fill="#fff" text-anchor="middle">P</text>`)}</div>
      <div class="tray">
        ${tray(32, svg`<path d="M10 12.500l6-6 6 6"></path>`)}
        ${tray(32, svg`<path d="M12.500 4.500h12V14h-9.500M18.500 14v3M14.500 17.500h8M9.500 4h4v3.500h-4zM11.500 7.500V11"></path>`)}
        ${tray(32, svg`<path d="M16 2.500q3 2 7 2 0 9-7 12.500Q9 13.500 9 4.500q4 0 7-2z" fill="#fff" stroke="none"></path><path d="M16 3v14M9.500 9.500h13" stroke="#01141e"></path><path d="M20.500 9.500l5 8.500h-10z" fill="#f7bd1b" stroke="none"></path><path d="M20.500 12.500v3M20.500 16v1" stroke="#222"></path>`)}
        ${tray(35, svg`<path d="M8.500 8v4h2.500l3.500 3.500v-11L11 8zM17 8q1.500 2 0 4M19.500 6q3 4 0 8M22 4q4.500 6 0 12"></path>`)}
        ${tray(36, svg`<path d="M12 17q-3 1-2.500-1.500 1-3 4-3.500l8-9q2-.5 1.500 1.500L15 14q-1.500 2.500-3 3M16 5.500q-2 2-1.500 5M17 11.500q-1 4 1 3.500 1.500-4 4.500-4.500 2 .5.500 3"></path>`)}
        ${tray(43, svg`<path d="M10.500 4.500h22v12h-22z"></path><path d="M13 8.500h17M13 11h17" stroke-dasharray="1 1"></path><path d="M16 14h11"></path>`)}
        ${tray(38, svg`<path d="M11.500 4.500h14v11h-14zM11.500 10.500h14M18.500 10.500v5"></path>`)}
        <div class="clock"><div>15:00</div><div>2025/9/12</div></div>
        ${icon(34, 30, svg`<path d="M0 5h15v11H7l-3 3.500V16H0z" fill="#fff"></path><path d="M3 8.500h10M3 11h10M3 13.500h6" stroke="#01141e"></path><circle cx="15" cy="20.500" r="7.800" fill="#2d3a42" stroke="#87919a"></circle><text x="15" y="24.500" font-size="11" fill="#fff" text-anchor="middle" font-weight="600">1</text>`)}
        <div class="peek"></div>
      </div>
    </footer>`;
  }

  render() {
    return html`<div class="app">${this.head()}${this.ribbon()}${this.main()}${this.status()}${this.taskbar()}</div>
      <div class="redline"></div>
      <div class="banner"><span class="left">距上课还剩 32 秒</span><span class="next">下节课是：</span><span class="subject">英语</span><span class="time">15:00-15:40</span></div>
      <div class="float">${icon(62, 62, svg`<circle cx="31" cy="31" r="30.700" fill="#3c3c40" fill-opacity=".92"></circle><path d="M24 22l19-3q4 0 4 4v15q0 4-4 5z" fill="#66666b"></path><path d="M20 22l20-3q3 0 4 4v15q-1 4-3 5z" fill="#85858a"></path><path d="M18 23l19-3.500q4 0 4 4v17q0 3-3 3.500l-19 0q-4 0-4-4V26q0-2.500 3-3z" fill="#a9a9ad"></path><text x="28" y="37.500" font-size="12.500" font-weight="800" fill="#2c2c30" text-anchor="middle">EN</text>`)}</div>
      <div class="ime">${icon(152, 22, svg`
        <path d="M5 2v18" stroke="#aaa" stroke-width="2" stroke-dasharray="2 2"></path>
        <rect x="12.500" y="3.500" width="15" height="15" fill="none" stroke="#777"></rect>
        <g font-size="15" fill="#111" text-anchor="middle" font-family="Open Sans, Noto Sans CJK SC, sans-serif"><text x="20" y="16.500">M</text><text x="42" y="16.500">中</text><text x="101.500" y="16.500">简</text></g>
        <path d="M62 4q6 7-6 13 11 3 12-6Q68 6 62 4z" fill="none" stroke="#111" stroke-width="1.300"></path>
        <circle cx="78.500" cy="7" r="2" fill="none" stroke="#111"></circle><path d="M83 11q0-2 2-2t2 2.500-3.500 6q1.500-3 1-4.500-1.500 0-1.500-2z" fill="#111"></path>
        <circle cx="122" cy="11" r="5.800" fill="none" stroke="#111" stroke-width="1.800" stroke-dasharray="2.800 1.700"></circle><circle cx="122" cy="11" r="4.600" fill="none" stroke="#111"></circle><circle cx="122" cy="11" r="1.800" fill="none" stroke="#111"></circle>
        <path d="M141 8h5" stroke="#111" stroke-width="1.500"></path><path d="M140.500 14h6l-3 3z" fill="#111"></path>`)}</div>`;
  }
}
